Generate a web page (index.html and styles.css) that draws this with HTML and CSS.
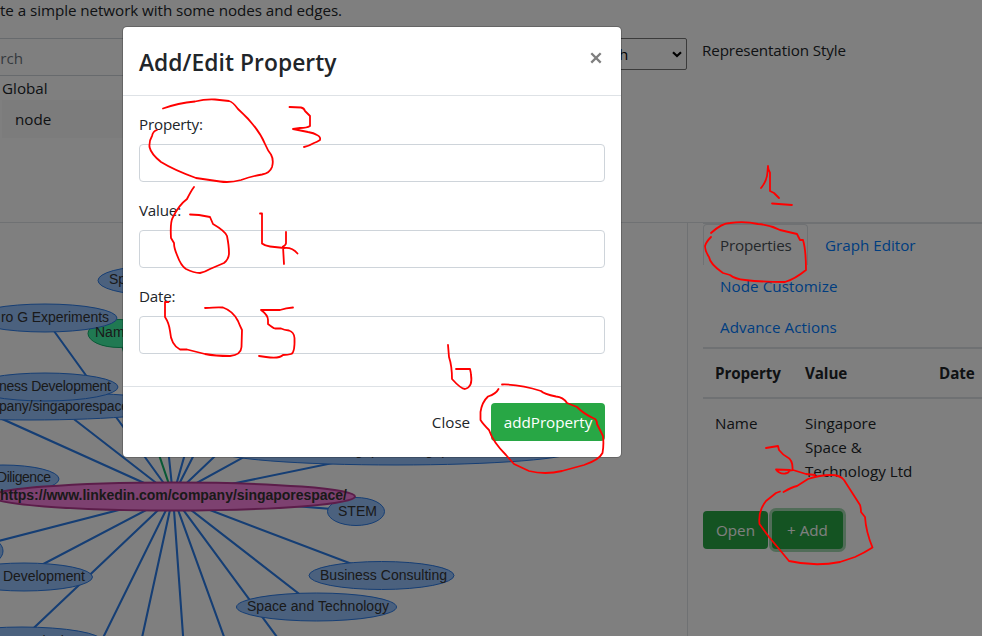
FILE: index.html
```html
<!DOCTYPE html>
<html lang="en">
<head>
<meta charset="utf-8">
<title>Network Editor</title>
<link rel="stylesheet" href="styles.css">
</head>
<body>
<main class="page">
  <section class="top">
    <p class="intro">te a simple network with some nodes and edges.</p>
    <div class="controls">
      <div class="search-col">
        <div class="search">Search</div>
        <div class="scope">Global</div>
        <div class="scope-item">node</div>
      </div>
      <div class="select"><span>Graph</span>
        <svg width="10" height="7" viewBox="0 0 10 7"><path d="M1 1.2 5 5 9 1.2" fill="none" stroke="#000" stroke-width="2.2"/></svg>
      </div>
      <div class="style-label">Representation Style</div>
    </div>
  </section>
  <section class="work">
    <svg class="graph" width="687" height="413" viewBox="0 223 687 413">
      <g class="edges">
        <path d="M173 496 54 331M173 496-20 409M173 496 57 406M173 496 161 380M173 496 206 380M173 496 232 380M173 496 295 380M173 496 384 380M173 496 430 443M173 496-40 551M173 496 30 571M173 496 20 641M173 496 94 656M173 496 138 656M173 496 184.500 656M173 496 231 656M173 496 291 656M173 496 316 607M173 496 381 575M173 496 356 511"/>
        <path class="green-edge" d="M173 496 118 334"/>
      </g>
      <g class="nodes">
        <ellipse cx="150" cy="280.500" rx="52" ry="14"/>
        <ellipse class="green" cx="119" cy="333.500" rx="31" ry="14"/>
        <ellipse cx="45" cy="318" rx="72" ry="14"/>
        <ellipse cx="30" cy="406" rx="150" ry="14"/>
        <ellipse cx="45" cy="387" rx="73" ry="14"/>
        <ellipse cx="396" cy="451" rx="178" ry="14"/>
        <ellipse cx="3" cy="479" rx="56" ry="14"/>
        <ellipse cx="356" cy="511.500" rx="28.500" ry="14"/>
        <ellipse class="pink" cx="173" cy="496.500" rx="182" ry="14"/>
        <ellipse cx="-17" cy="551" rx="20" ry="14"/>
        <ellipse cx="24" cy="577" rx="68.500" ry="14"/>
        <ellipse cx="381.500" cy="575.500" rx="72.500" ry="14"/>
        <ellipse cx="316.500" cy="607" rx="80" ry="14"/>
        <ellipse cx="22" cy="641" rx="80" ry="14"/>
      </g>
      <g class="labels">
        <text x="109" y="284">Space</text>
        <text x="95" y="337">Name</text>
        <text x="1" y="322" textLength="108">ro G Experiments</text>
        <text x="-1" y="391" textLength="112">ness Development</text>
        <text x="-1" y="411" textLength="130">pany/singaporespace</text>
        <text x="-3" y="482" textLength="54">Diligence</text>
        <text class="strong" x="0" y="500" textLength="347">https://www.linkedin.com/company/singaporespace/</text>
        <text x="338" y="516" textLength="39">STEM</text>
        <text x="3" y="581" textLength="82">Development</text>
        <text x="320" y="580" textLength="127">Business Consulting</text>
        <text x="247" y="611" textLength="142">Space and Technology</text>
        <text x="19" y="646" textLength="60">Marketing</text>
        <text x="334" y="455" textLength="136">Singapore Singapore</text>
      </g>
    </svg>
    <aside class="panel">
      <nav class="tabs">
        <a class="tab active">Properties</a>
        <a class="tab">Graph Editor</a>
        <a class="tab wide">Node Customize</a>
        <a class="tab wide">Advance Actions</a>
      </nav>
      <div class="row head"><b>Property</b><b>Value</b><b>Date</b></div>
      <div class="row"><span>Name</span><span>Singapore Space &amp; Technology Ltd</span><span></span></div>
      <div class="actions"><button class="btn open">Open</button><button class="btn add">+ Add</button></div>
    </aside>
  </section>
</main>
<div class="backdrop"></div>
<div class="modal">
  <header class="modal-head"><h1>Add/Edit Property</h1>
    <svg class="close" width="14" height="14" viewBox="0 0 14 14"><path d="m2.300 2.200 9.400 9.400m0-9.400-9.400 9.400" stroke="#7f7f7f" stroke-width="2.300"/></svg>
  </header>
  <div class="modal-body">
    <label>Property:</label><input type="text">
    <label>Value:</label><input type="text">
    <label>Date:</label><input type="text">
  </div>
  <footer class="modal-foot"><button class="btn plain">Close</button><button class="btn save">addProperty</button></footer>
</div>
<svg class="ink" width="982" height="636" viewBox="0 0 982 636">
  <path d="M163 108.500Q178 103 195 101.500Q205 99 215 99.500L229 101Q233 102 238 109Q258 127 265 144C268 151 268 151 271 154.500Q274 160 272 167Q270 173 262 174.500Q252 176 241 180Q230 183 220 181.500L196 178Q174 170 161 162Q151 154 149.500 147Q149 141 152 136Q153 131 157 130"/>
  <path d="M289.500 107 301 107.500Q304 108 305 111L310 116V126Q307 128 300 128L293 129 308 132Q314 133 317 135Q321 137 320 140Q317 142 314 143Q309 146 304 147"/>
  <path d="M194 187Q191 191 187 199Q179 205 173 217Q170 222 171 238L174 243Q174 248 177 255Q181 266 186 269Q194 273 200 273Q205 272 210 269L224 263Q229 259 229 253Q229 246 227 236Q225 231 213 224L210 217 199 215 190 214.500"/>
  <path d="M260 213.500H262V243.500Q265 246 270 246.500L284 248Q292 247 297.500 253.500M286 232V243Q286 245 283 246.500L284 264"/>
  <path d="M168.500 302H165V317Q169 323 170 331Q171 345 180 349.500H187L205 354Q215 356 230 356Q241 355 241.500 347L242 330Q240 326 238 321Q233 311 223 307.500Q218 307 205 308"/>
  <path d="M293 307.500Q286 308 280 310H261Q268 315 268 320V324Q273 328 275 328.500H281Q284 330 289 330.500Q294 332 294.500 338Q295 353 291 354Q288 355 283 355Q279 359 266 357L259 356"/>
  <path d="M448 345 449 357Q452 366 452 379Q461 389 465 389Q473 387 471 375Q471 373 470 369V369H456"/>
  <path d="M498.500 389Q496 394 488 396.500Q482 402 480.500 412V420Q483 424 489 430Q493 442 506 455L514 464 529 471Q545 475 562 471L584 465Q599 460 602.500 453Q604 445 603 436L597 424Q597 419 593 418Q584 414 577 407L567 403Q563 397 556 396.500Q544 394 541 391Q520 384 502 384.500"/>
  <path d="M761 188Q767 181 767.500 172L768 166Q768 170 770 172.500V191L774 193 779 198M772 203.500 792 205"/>
  <path d="M711 233Q722 223 730 223Q745 221 758 224Q770 225 780 230L797 234 800 240H803Q806 250 806 270Q795 279 785 282Q762 282 745 280Q735 279 730 275L723 273Q710 264 709 257Q705 251 705 246Q706 242 711 237"/>
  <path d="M766 448 778 446 779 450Q783 455 787 457Q793 460 792.500 469Q794 471 790 470L776 469.500Q779 474 785 473.500Q789 473 789 471L793 470 806 474 815 475M783.500 492Q792 487 797 486L808 479Q820 475 831 475Q840 475 844 480L860 505Q861 508 861 512L865 517Q866 532 872.500 547.500Q864 553 855 557L840 562Q815 567 789 561Q780 550 769 537L759.500 524Q758 511 766 501L776 493 780 491.500"/>
</svg>
</body>
</html>
```
FILE: styles.css
```css
* { box-sizing: border-box; }
body { margin: 0; font: 15.2px/24px "Open Sans", sans-serif; color: #212529; background: #fff; }
.page { width: 982px; height: 636px; overflow: hidden; }
.top { height: 223px; border-bottom: 1px solid #dee2e6; }
.intro { margin: 0; height: 38px; line-height: 20px; letter-spacing: -.06px; }
.controls { display: flex; height: 150px; }
.search-col { width: 400px; flex: none; overflow: hidden; }
.search { height: 38px; border: solid #ced4da; border-width: 1px 0; line-height: 38px; color: #6c757d; text-indent: -25px; }
.scope { padding-left: 2px; line-height: 24px; }
.scope-item { height: 38px; margin-left: 2px; padding-left: 13px; line-height: 38px; background: #f8f8f8; }
.select { width: 287px; height: 32px; border: 1px solid #767676; border-radius: 2px; display: flex; align-items: center; justify-content: space-between; padding: 0 4px 0 183px; color: #000; }
.style-label { padding-left: 15px; letter-spacing: -.12px; }
.work { display: flex; height: 413px; }
.graph { flex: none; display: block; }
.edges path { fill: none; stroke: #2b7ce9; stroke-width: 2.1; }
.edges .green-edge { stroke: #10b26b; }
.nodes ellipse { fill: #97c2fc; stroke: #2b7ce9; stroke-width: 1; }
.nodes .green { fill: #41f3a5; stroke: #10b26b; }
.nodes .pink { fill: #fb83e1; stroke: #b83a94; stroke-width: 2; }
.labels { font: 14px "Liberation Sans", sans-serif; fill: #343434; }
.labels .strong { font-weight: bold; }
.panel { width: 295px; padding-left: 15px; border-left: 1px solid #dee2e6; }
.tabs { display: flex; flex-wrap: wrap; border-top: 1px solid #dee2e6; border-bottom: 2px solid #dee2e6; height: 126px; align-content: flex-start; }
.tab { height: 41px; padding: 8px 16px; border: 1px solid transparent; border-bottom: 0; color: #007bff; line-height: 24px; white-space: nowrap; }
.tab.active { color: #495057; border-color: #dee2e6; border-radius: 4px 4px 0 0; width: 105px; letter-spacing: -.2px; }
.tab.wide { letter-spacing: .07px; }
.row { display: grid; grid-template-columns: 90px 134px 55px; line-height: 24px; padding-top: 12px; }
.row > * { padding-left: 12px; padding-right: 12px; }
.row > b { letter-spacing: -.1px; }
.row > b:last-child { padding-right: 0; }
.row.head { height: 50px; border-bottom: 2px solid #dee2e6; }
.actions { display: flex; gap: 4px; margin-top: 28px; }
.btn { height: 38px; border: 0; border-radius: 4px; background: #28a745; color: #fff; font: inherit; padding: 0; }
.open { width: 65px; }
.add { width: 71px; box-shadow: 0 0 0 3px rgba(72,180,97,.5); }
.backdrop { position: absolute; inset: 0; background: rgba(0,0,0,.5); }
.modal { position: absolute; left: 122px; top: 26px; width: 500px; height: 432px; border: 1px solid rgba(0,0,0,.2); border-radius: 5px; background: #fff; background-clip: padding-box; }
.modal-head { height: 69px; display: flex; justify-content: space-between; padding: 16px; border-bottom: 1px solid #dee2e6; }
h1 { margin: 0; font: 600 22.8px/40px "Open Sans", sans-serif; letter-spacing: .05px; }
.close { margin: 8px 2px 0 0; }
.modal-body { height: 290px; padding: 16px; }
label { display: block; line-height: 24px; height: 32px; letter-spacing: -.2px; }
input { display: block; width: 466px; height: 38px; border: 1px solid #ced4da; border-radius: 4px; margin-bottom: 16px; background: #fff; }
.modal-foot { height: 71px; border-top: 1px solid #dee2e6; display: flex; align-items: center; justify-content: flex-end; padding: 0 16px; gap: 8px; }
.plain { width: 64px; background: transparent; color: #212529; }
.save { width: 114px; }
.ink { position: absolute; left: 0; top: 0; pointer-events: none; }
.ink path { fill: none; stroke: #f00; stroke-width: 1.8; stroke-linecap: round; stroke-linejoin: round; }
```
